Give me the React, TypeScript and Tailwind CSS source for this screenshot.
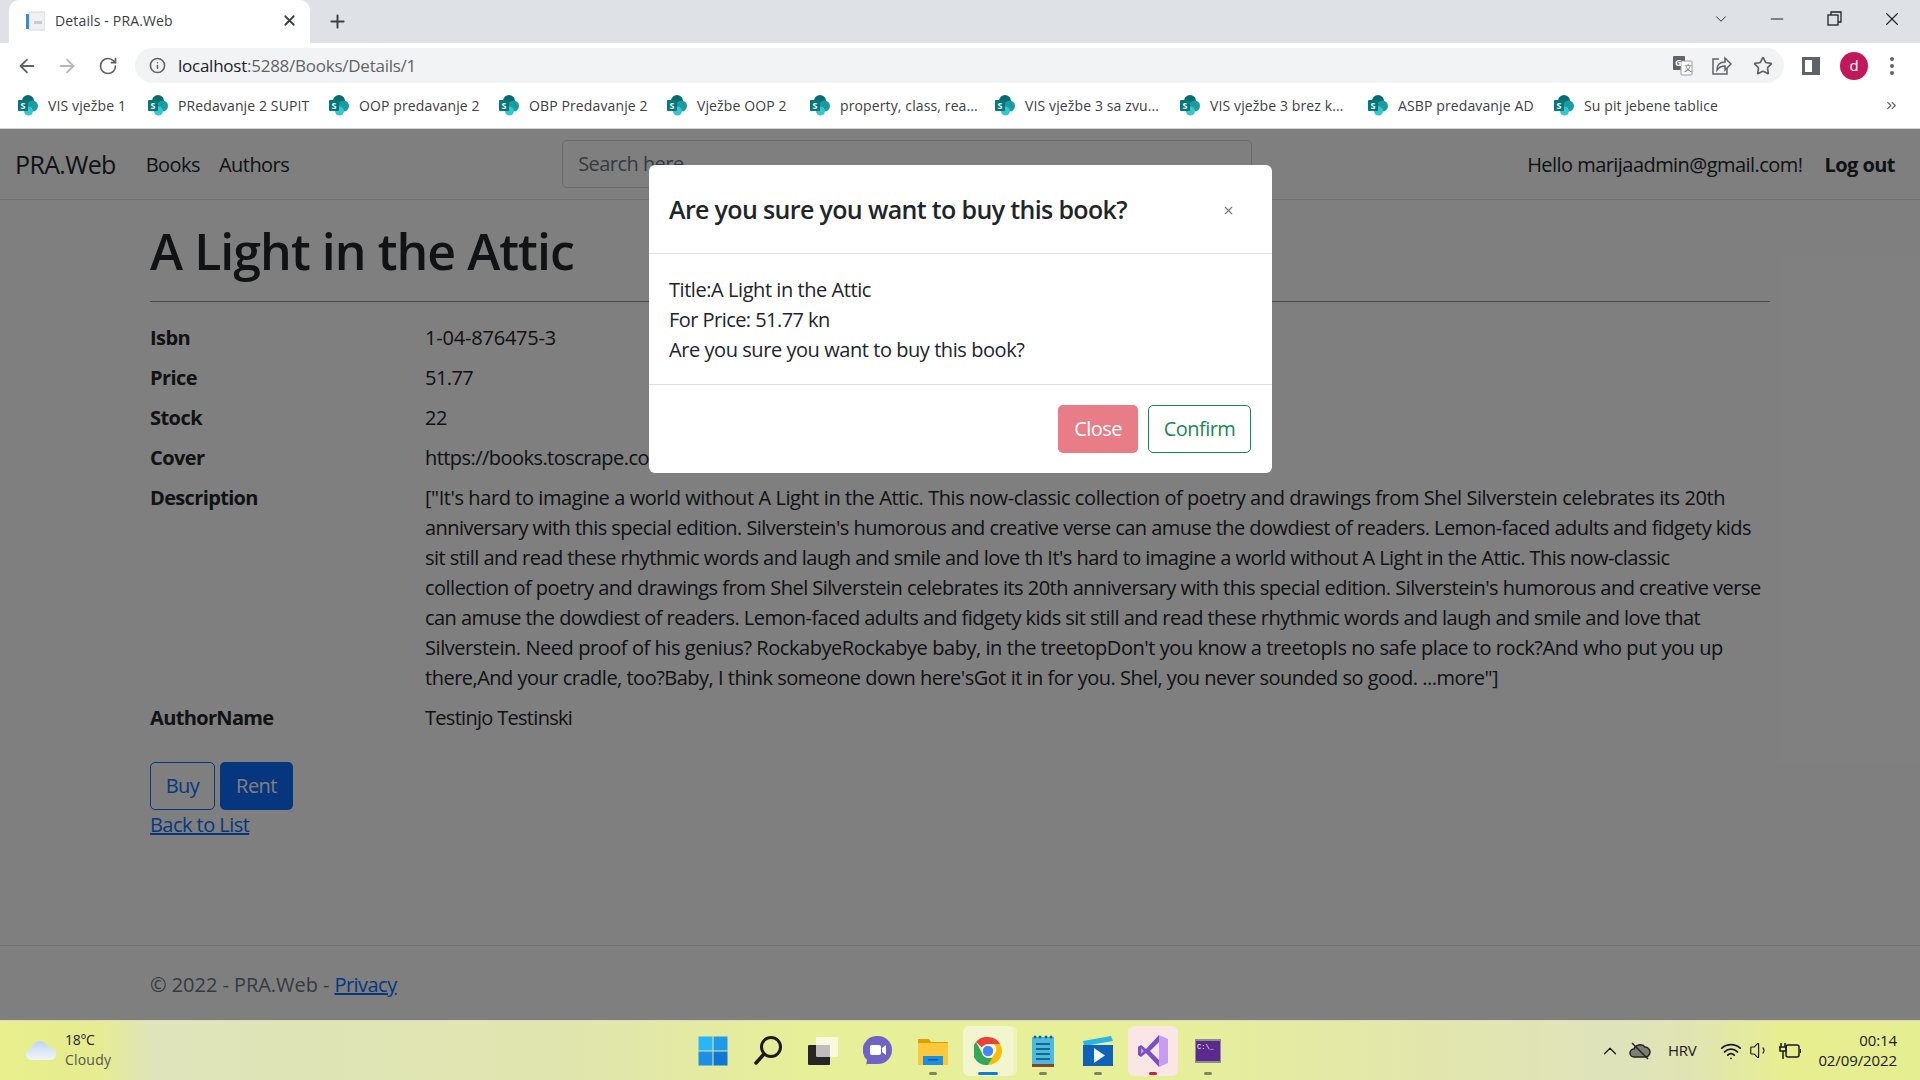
import { ArrowLeft, ArrowRight, RotateCw, Info, Star, ChevronDown, ChevronUp, Minus, X, Plus, ChevronsRight, Wifi, Volume1 } from "lucide-react";

const bookmarks = [
    { name: "VIS vježbe 1", w: 80 },
    { name: "PRedavanje 2 SUPIT", w: 131 },
    { name: "OOP predavanje 2", w: 120 },
    { name: "OBP Predavanje 2", w: 118 },
    { name: "Vježbe OOP 2", w: 93 },
    { name: "property, class, rea...", w: 135 },
    { name: "VIS vježbe 3 sa zvu...", w: 135 },
    { name: "VIS vježbe 3 brez k...", w: 138 },
    { name: "ASBP predavanje AD", w: 136 },
    { name: "Su pit jebene tablice", w: 134 },
];

// opis je prelomljen ručno, kao na slici
const descLines = [
    { text: "[\"It's hard to imagine a world without A Light in the Attic. This now-classic collection of poetry and drawings from Shel Silverstein celebrates its 20th", cls: "tracking-[-0.425px]" },
    { text: "anniversary with this special edition. Silverstein's humorous and creative verse can amuse the dowdiest of readers. Lemon-faced adults and fidgety kids", cls: "tracking-[-0.55px]" },
    { text: "sit still and read these rhythmic words and laugh and smile and love th It's hard to imagine a world without A Light in the Attic. This now-classic", cls: "tracking-[-0.55px]" },
    { text: "collection of poetry and drawings from Shel Silverstein celebrates its 20th anniversary with this special edition. Silverstein's humorous and creative verse", cls: "tracking-[-0.52px]" },
    { text: "can amuse the dowdiest of readers. Lemon-faced adults and fidgety kids sit still and read these rhythmic words and laugh and smile and love that", cls: "tracking-[-0.55px]" },
    { text: "Silverstein. Need proof of his genius? RockabyeRockabye baby, in the treetopDon't you know a treetopIs no safe place to rock?And who put you up", cls: "tracking-[-0.44px]" },
    { text: "there,And your cradle, too?Baby, I think someone down here'sGot it in for you. Shel, you never sounded so good. ...more\"]", cls: "tracking-[-0.5px]" },
];

const details = [
    { label: "Isbn", value: "1-04-876475-3", cls: "tracking-[-0.2px]" },
    { label: "Price", value: "51.77", cls: "" },
    { label: "Stock", value: "22", cls: "" },
    { label: "Cover", value: "https://books.toscrape.com/media/cache/fe/72/fe72f0532301ec28892ae79a629a293c.jpg", cls: "" },
];

function SharePointIcon() {
    return (
        <svg width="21" height="21" viewBox="0 0 21 21" className="shrink-0">
            <circle cx="10" cy="6" r="6" fill="#036c70" />
            <circle cx="14.5" cy="11" r="5.5" fill="#1a9ba1" />
            <circle cx="10.5" cy="16" r="4.5" fill="#37c6d0" />
            <rect x="0" y="5" width="10" height="11" rx="1" fill="#03787c" />
            <text x="5" y="14" textAnchor="middle" fontSize="9" fontWeight="700" fill="#fff" fontFamily="Open Sans">S</text>
        </svg>
    );
}

function ChromeLogo() {
    return (
        <svg width="28" height="28" viewBox="0 0 28 28" className="relative">
            <path d="M14 0a14 14 0 0 1 12.1 7H14a7 7 0 0 0-6.1 3.5L2 4.9A14 14 0 0 1 14 0z" fill="#ea4335" />
            <path d="M26.1 7A14 14 0 0 1 14 28l6-10.5A7 7 0 0 0 20 7z" fill="#fbbc04" />
            <path d="M14 28A14 14 0 0 1 2 4.9l5.900 10.600A7 7 0 0 0 14 21h4.500z" fill="#34a853" />
            <circle cx="14" cy="14" r="6.500" fill="#fff" />
            <circle cx="14" cy="14" r="5.200" fill="#4285f4" />
        </svg>
    );
}

function TaskIcon({ children, dot, active, pink }: { children: React.ReactNode; dot?: string; active?: boolean; pink?: boolean }) {
    return (
        <div className={`relative flex h-[50px] w-[50px] shrink-0 mx-[2.500px] items-center justify-center rounded-md ${active ? "bg-[#f2f6cf]" : ""} ${pink ? "bg-[#fbe6e6]" : ""}`}>
            {active && <span className="absolute inset-y-0 -right-[4px] w-[8px] rounded-r-md bg-[#f2f6cf]/70" />}
            {children}
            {dot && <span className={`absolute bottom-[1px] h-[3px] rounded-full ${dot}`} />}
        </div>
    );
}

function Taskbar() {
    return (
        <div className="flex h-[60px] items-center bg-[linear-gradient(90deg,#e8ef8c_0%,#e6ec90_5%,#dfe4bb_8%,#e0e5ae_30%,#e7ef98_42%,#e7ef98_60%,#e2e6ae_75%,#dfe3bb_84%,#e0e4b4_88%,#e7ee90_93%,#e6ee92_100%)] border-t border-[#d9dcc0]">
            <div className="flex w-[668px] items-center pl-[26px] shrink-0">
                <svg width="30" height="22" viewBox="0 0 30 22">
                    <defs>
                        <linearGradient id="cl" x1="0" y1="0" x2="0" y2="1">
                            <stop offset="0" stopColor="#bcd6f5" />
                            <stop offset="1" stopColor="#f2f5f8" />
                        </linearGradient>
                    </defs>
                    <path d="M6 20a5.500 5.500 0 0 1-1-11C7 3 11 1 14 1c4 0 7 3 8 6 5 0 8 3 8 7 0 4-3 6-6 6z" fill="url(#cl)" />
                </svg>
                <div className="ml-[9px] pb-[1px] text-[14px] leading-[20px] text-[#1a1a1a]">
                    <div className="tracking-[-0.3px]">18°C</div>
                    <div className="tracking-[0.2px] text-[#55584a]">Cloudy</div>
                </div>
            </div>
            <div className="flex items-center pl-[17px] w-[580px] shrink-0">
                <TaskIcon>
                    <svg width="30" height="30" viewBox="0 0 30 30">
                        <rect x="0.500" y="0.500" width="14" height="14" fill="#29b6f6" />
                        <rect x="15.500" y="0.500" width="14" height="14" fill="#1e9be8" />
                        <rect x="0.500" y="15.500" width="14" height="14" fill="#1a8fe3" />
                        <rect x="15.500" y="15.500" width="14" height="14" fill="#0f78d4" />
                    </svg>
                </TaskIcon>
                <TaskIcon>
                    <svg width="30" height="30" viewBox="0 0 30 30" fill="none">
                        <circle cx="18" cy="11" r="9.500" stroke="#1c1c1c" strokeWidth="3" />
                        <path d="M11 18 3 27" stroke="#1c1c1c" strokeWidth="3.500" strokeLinecap="round" />
                    </svg>
                </TaskIcon>
                <TaskIcon>
                    <svg width="30" height="30" viewBox="0 0 30 30">
                        <rect x="0" y="9" width="22" height="20" rx="1" fill="#262626" />
                        <rect x="8" y="1" width="22" height="20" rx="1" fill="#fff" fillOpacity="0.7" />
                    </svg>
                </TaskIcon>
                <TaskIcon>
                    <svg width="30" height="32" viewBox="0 0 30 32">
                        <path d="M15 1a14 14 0 0 1 0 28H3v2l1-6A14 14 0 0 1 15 1z" fill="#6f63c4" />
                        <rect x="7" y="10" width="11" height="10" rx="2" fill="#fff" />
                        <path d="M19 13l4-3v10l-4-3z" fill="#fff" />
                    </svg>
                </TaskIcon>
                <TaskIcon dot="w-[8px] bg-[#7f8560]">
                    <svg width="30" height="28" viewBox="0 0 30 28">
                        <path d="M0 2h11l2 3h17v5H0z" fill="#e0a000" />
                        <rect x="0" y="6" width="30" height="22" fill="#fcc93c" />
                        <path d="M5 19h20v9H5z" fill="#1a8fe3" />
                        <rect x="10" y="22" width="10" height="1.500" fill="#0b5aa0" />
                    </svg>
                </TaskIcon>
                <TaskIcon active dot="w-[20px] bg-[#0b7fd6]">
                    <ChromeLogo />
                </TaskIcon>
                <TaskIcon dot="w-[8px] bg-[#7f8560]">
                    <svg width="22" height="32" viewBox="0 0 22 32">
                        <rect x="0" y="2" width="22" height="28" rx="1" fill="#4fb8dc" />
                        <rect x="0" y="29" width="22" height="3" fill="#7a4a2a" />
                        <circle cx="3" cy="2" r="1.500" fill="#0b6a8a" />
                        <circle cx="8" cy="2" r="1.500" fill="#0b6a8a" />
                        <circle cx="14" cy="2" r="1.500" fill="#0b6a8a" />
                        <circle cx="19" cy="2" r="1.500" fill="#0b6a8a" />
                        <path d="M4 9h14M4 14h14M4 19h14M4 24h14" stroke="#0f6a8e" strokeWidth="2" />
                    </svg>
                </TaskIcon>
                <TaskIcon dot="w-[8px] bg-[#7f8560]">
                    <svg width="30" height="30" viewBox="0 0 30 30">
                        <path d="M0 5 28 0l2 5L1 10z" fill="#29b6e6" />
                        <rect x="0" y="9" width="30" height="21" fill="#0f62b8" />
                        <path d="M11 12l11 7.500L11 27z" fill="#eaf4fb" />
                    </svg>
                </TaskIcon>
                <TaskIcon pink dot="w-[8px] bg-[#c4272c]">
                    <svg width="30" height="32" viewBox="0 0 30 32">
                        <path d="M21 0l9 4v24l-9 4z" fill="#c79cf2" />
                        <path d="M21 0 8 14 3 10l-3 2v8l3 2 5-4 13 14v-7l-9-9 9-9z" fill="#7a4fc4" />
                        <path d="M3 13v6l3-3z" fill="#c79cf2" />
                    </svg>
                </TaskIcon>
                <TaskIcon dot="w-[8px] bg-[#7f8560]">
                    <svg width="26" height="24" viewBox="0 0 26 24">
                        <rect x="0" y="0" width="26" height="24" fill="#8e8e8e" />
                        <rect x="1" y="2" width="24" height="20" fill="#5a2a8c" />
                        <text x="2" y="10" fontSize="7" fill="#fff" fontFamily="Liberation Mono">C:\_</text>
                    </svg>
                </TaskIcon>
            </div>
            <div className="flex flex-1 items-center justify-end pr-[23px]">
                <ChevronUp size={22} strokeWidth={1.300} className="text-[#1a1a1a] mr-[8px]" />
                <svg width="22" height="20" viewBox="0 0 22 20" className="mr-[17px]">
                    <path d="M5 16a4 4 0 0 1 0-8c1-4 8-6 11-2 3 0 5 3 5 5s-2 5-4 5z" fill="#7d7f72" stroke="#222" strokeWidth="1.500" />
                    <path d="M3 2l16 16" stroke="#222" strokeWidth="1.500" />
                </svg>
                <span className="text-[15px] text-[#1a1a1a] tracking-[-0.3px] mr-[24px]">HRV</span>
                <Wifi size={22} strokeWidth={2} className="text-[#1a1a1a] mr-[7px]" />
                <Volume1 size={21} strokeWidth={1.300} className="text-[#1a1a1a] mr-[9px]" />
                <svg width="22" height="16" viewBox="0 0 22 16" fill="none" className="mr-[17px]">
                    <rect x="7" y="2" width="13" height="12" rx="2" stroke="#1a1a1a" strokeWidth="1.500" />
                    <rect x="21" y="6" width="1" height="4" fill="#1a1a1a" />
                    <path d="M0 4h8M2 0v4M6 0v4M1 4v4h6V4M4 8v8" stroke="#1a1a1a" strokeWidth="1.500" />
                </svg>
                <div className="pb-[2px] text-right text-[15px] leading-[20px] tracking-[-0.1px] text-[#1a1a1a]">
                    <div>00:14</div>
                    <div>02/09/2022</div>
                </div>
            </div>
        </div>
    );
}

function BrowserChrome() {
    return (
        <div className="shrink-0 font-['Open_Sans',sans-serif]">
            {/* Tabs */}
            <div className="flex h-[43px] items-end bg-[#dee1e6]">
                <div className="ml-[9px] flex h-[43px] w-[301px] items-center rounded-t-[10px] bg-white pb-[2px] pl-[16px] pr-[12px]">
                    <svg width="20" height="20" viewBox="0 0 20 20" className="shrink-0">
                        <rect x="4" y="1" width="16" height="18" fill="#eef0f3" stroke="#d6d9dd" />
                        <rect x="1" y="3" width="3" height="15" fill="#3d8ad0" />
                        <rect x="9" y="10" width="8" height="3" fill="#c9ccd1" />
                    </svg>
                    <span className="ml-[10px] flex-1 text-[14px] tracking-[0.15px] text-[#3c4043]">Details - PRA.Web</span>
                    <X size={17} strokeWidth={2.500} className="text-[#3c4043]" />
                </div>
                <Plus size={21} strokeWidth={2.200} className="ml-[17px] mb-[11px] text-[#3c4043]" />
                <div className="flex-1" />
                <div className="mb-[13px] flex items-center gap-[37px] pr-[17px] text-[#202124]">
                    <ChevronDown size={18} strokeWidth={1.200} />
                    <Minus size={20} strokeWidth={1.200} />
                    <svg width="20" height="20" viewBox="0 0 20 20" fill="none" stroke="#202124" strokeWidth="1.300">
                        <rect x="4" y="6" width="10" height="10" />
                        <path d="M7 6V3h10v10h-3" />
                    </svg>
                    <X size={22} strokeWidth={1.200} />
                </div>
            </div>
            {/* Toolbar */}
            <div className="flex h-[45px] items-center bg-white">
                <ArrowLeft size={22} strokeWidth={2} className="ml-[16px] text-[#5f6368]" />
                <ArrowRight size={22} strokeWidth={2} className="ml-[18px] text-[#b6b8bb]" />
                <RotateCw size={20} strokeWidth={2} className="ml-[20px] text-[#5f6368]" />
                <div className="ml-[17px] flex h-[35px] flex-1 items-center rounded-full bg-[#f1f3f4] pl-[14px] pr-[11px]">
                    <Info size={17} strokeWidth={2.200} className="text-[#5f6368]" />
                    <span className="ml-[12px] text-[17px] tracking-[-0.25px] text-[#202124]">
                        localhost<span className="text-[#5f6368]">:5288/Books/Details/1</span>
                    </span>
                    <div className="flex-1" />
                    <svg width="20" height="20" viewBox="0 0 20 20" className="mr-[19px]">
                        <rect x="0" y="0" width="12" height="14" rx="1" fill="#5f6368" />
                        <rect x="8" y="5" width="11" height="14" rx="1" fill="#fff" stroke="#9a9da1" />
                        <text x="2" y="10" fontSize="9" fontWeight="700" fill="#fff" fontFamily="Open Sans">G</text>
                        <text x="11" y="15" fontSize="8" fill="#5f6368" fontFamily="Noto Sans CJK SC">文</text>
                    </svg>
                    <svg width="20" height="20" viewBox="0 0 20 20" fill="none" stroke="#5f6368" strokeWidth="1.500" className="mr-[21px]">
                        <path d="M7 3H1v15h14v-6" />
                        <path d="M5 14c0-5 3-8 8-8V2l6 6-6 6v-4c-4 0-6 1-8 4z" />
                    </svg>
                    <Star size={20} strokeWidth={2} className="text-[#5f6368]" />
                </div>
                <div className="ml-[18px] h-[18px] w-[18px] border-[3px] border-r-[8px] border-[#5f6368]" />
                <div className="ml-[20px] flex h-[28px] w-[28px] items-center justify-center rounded-full bg-[#c2185b] text-[15px] text-white">d</div>
                <div className="ml-[22px] mr-[26px] flex flex-col gap-[3px]">
                    <span className="h-[4px] w-[4px] rounded-full bg-[#5f6368]" />
                    <span className="h-[4px] w-[4px] rounded-full bg-[#5f6368]" />
                    <span className="h-[4px] w-[4px] rounded-full bg-[#5f6368]" />
                </div>
            </div>
            {/* Bookmarks */}
            <div className="flex h-[41px] items-center border-b border-[#d3d4d6] bg-white pb-[5px] pl-[18px]">
                {bookmarks.map((b) => (
                    <div key={b.name} className="mr-[20px] flex items-center">
                        <SharePointIcon />
                        <span className="ml-[9px] whitespace-nowrap text-[14px] tracking-[0.12px] text-[#3c4043]" style={{ width: b.w }}>{b.name}</span>
                    </div>
                ))}
                <div className="flex-1" />
                <ChevronsRight size={15} strokeWidth={2} className="mr-[21px] text-[#5f6368]" />
            </div>
        </div>
    );
}

function PageContent() {
    return (
        <div className="relative flex flex-1 flex-col overflow-hidden bg-white font-['Open_Sans',sans-serif] text-[20px] leading-[30px] tracking-[-0.55px] text-[#212529]">
            <nav className="flex h-[71px] shrink-0 items-center border-b border-[#dee2e6] pl-[15px] pr-[25px]">
                <span className="text-[25px] tracking-[-0.65px]">PRA.Web</span>
                <span className="ml-[30px] pt-[2px]">Books</span>
                <span className="ml-[19px] pt-[2px]">Authors</span>
                <div className="ml-[273px] flex h-[48px] w-[690px] items-center rounded-[5px] border border-[#ced4da] pl-[15px] text-[#6c757d]">Search here</div>
                <div className="flex-1" />
                <span className="pt-[2px]">Hello marijaadmin@gmail.com!</span>
                <span className="ml-[22px] pt-[2px] font-bold">Log out</span>
            </nav>

            <main className="mx-[150px] flex-1 pt-[21px]">
                <h1 className="text-[50px] font-[550] leading-[60px] tracking-[-0.95px]">A Light in the Attic</h1>
                <hr className="mt-[20px] border-[#8f9193]" />
                <dl className="mt-[21px]">
                    {details.map((d) => (
                        <div key={d.label} className="mb-[10px] flex">
                            <dt className="w-[275px] font-bold">{d.label}</dt>
                            <dd className={`whitespace-nowrap ${d.cls}`}>{d.value}</dd>
                        </div>
                    ))}
                    <div className="mb-[10px] flex">
                        <dt className="w-[275px] font-bold tracking-[-0.65px]">Description</dt>
                        <dd>
                            {descLines.map((line) => (
                                <div key={line.text} className={`whitespace-nowrap ${line.cls}`}>{line.text}</div>
                            ))}
                        </dd>
                    </div>
                    <div className="mb-[10px] flex">
                        <dt className="w-[275px] font-bold tracking-[-0.65px]">AuthorName</dt>
                        <dd className="tracking-[-0.7px]">Testinjo Testinski</dd>
                    </div>
                </dl>
                <div className="mt-[29px] flex gap-[5px]">
                    <button className="h-[48px] w-[65px] rounded-[5px] border border-[#0d6efd] text-[#0d6efd]">Buy</button>
                    <button className="h-[48px] w-[73px] rounded-[5px] bg-[#0d6efd] text-white">Rent</button>
                </div>
                <a className="block text-[#0d6efd] underline">Back to List</a>
            </main>

            <footer className="flex h-[75px] shrink-0 items-center border-t border-[#dee2e6] pl-[150px] pt-[4px] text-[#6c757d]">
                <span className="tracking-[-0.05px]">© 2022 - PRA.Web - <a className="tracking-[-0.55px] text-[#0d6efd] underline">Privacy</a></span>
            </footer>

            {/* Backdrop + modal */}
            <div className="absolute inset-0 flex justify-center bg-black/50 pt-[36px]">
                <div className="ml-[1px] h-[308px] w-[623px] rounded-[6px] bg-white">
                    <div className="flex h-[89px] items-center border-b border-[#dee2e6] pl-[20px] pr-[37px]">
                        <h5 className="flex-1 text-[25px] font-[550] tracking-[-0.65px]">Are you sure you want to buy this book?</h5>
                        <X size={13} strokeWidth={2} className="mt-[2px] text-[#777]" />
                    </div>
                    <div className="h-[131px] border-b border-[#dee2e6] px-[20px] pt-[21px] tracking-[-0.44px]">
                        <div>Title:A Light in the Attic</div>
                        <div className="tracking-[-0.55px]">For Price: 51.77 kn</div>
                        <div>Are you sure you want to buy this book?</div>
                    </div>
                    <div className="flex justify-end gap-[10px] px-[21px] pt-[20px]">
                        <button className="h-[48px] w-[80px] rounded-[5px] bg-[#e87c87] text-white">Close</button>
                        <button className="h-[48px] w-[103px] rounded-[5px] border border-[#198754] text-[#198754]">Confirm</button>
                    </div>
                </div>
            </div>
        </div>
    );
}

export default function App() {
    return (
        <div className="flex h-[1080px] w-[1920px] flex-col overflow-hidden font-['Open_Sans',sans-serif]">
            <BrowserChrome />
            <PageContent />
            <Taskbar />
        </div>
    );
}
